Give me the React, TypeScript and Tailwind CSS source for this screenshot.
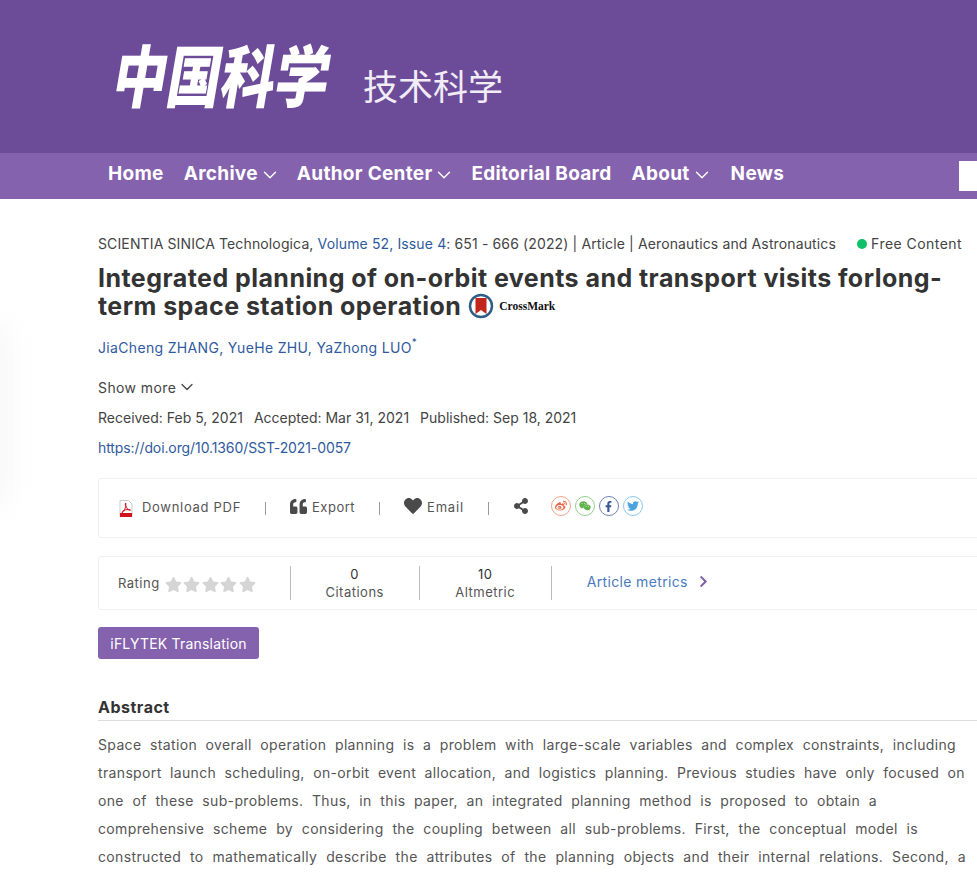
import React from 'react';
import { ChevronDown } from 'lucide-react';
import { FaQuoteLeft, FaHeart, FaShareAlt, FaStar, FaChevronRight, FaWeibo, FaWeixin, FaFacebookF, FaTwitter } from 'react-icons/fa';

const navItems = [
  { label: 'Home', className: '' },
  { label: 'Archive', caret: true, className: '' },
  { label: 'Author Center', caret: true, className: '' },
  { label: 'Editorial Board', className: '' },
  { label: 'About', caret: true, className: '' },
  { label: 'News', className: 'ml-[2px]' },
];

const PdfIcon = () => (
  <svg width="14" height="17" viewBox="0 0 14 17">
    <path d="M1 .5h8.500L13 4v12.500H1z" fill="#fff" stroke="#bbb" strokeWidth=".8" />
    <path d="M6.500 3c-.8 1.500.8 4 2 6 .9 1.300 2.500 1.800 3 1-.5-.8-3-.6-5-.1-2 .6-4 1.700-3.600 2.600.6.700 2.500-1.500 3.300-4.200C6.600 6 7.300 3.500 6.500 3z" fill="none" stroke="#d0121b" strokeWidth="1" />
    <rect x="1" y="13" width="12" height="4" fill="#d0121b" />
  </svg>
);

const CrossMark = () => (
  <svg width="26" height="26" viewBox="0 0 26 26">
    <circle cx="13" cy="13" r="11" fill="#fff" stroke="#2f5d86" strokeWidth="2.500" />
    <path d="M7.500 5h11v16L13 17l-5.500 4z" fill="#c2261a" />
  </svg>
);

const SocialIcon = ({ ring, children }: { ring: string; children: React.ReactNode }) => (
  <span className={`flex h-[20px] w-[20px] items-center justify-center rounded-full border ${ring}`}>
    {children}
  </span>
);

const Divider = () => <span className="mx-[24px] h-[13px] w-px bg-[#999]" />;

const abstractLines = [
  { text: 'Space station overall operation planning is a problem with large-scale variables and complex constraints, including', width: 'w-[858px]' },
  { text: 'transport launch scheduling, on-orbit event allocation, and logistics planning. Previous studies have only focused on', width: 'w-[867px]' },
  { text: 'one of these sub-problems. Thus, in this paper, an integrated planning method is proposed to obtain a', width: 'w-[779px]' },
  { text: 'comprehensive scheme by considering the coupling between all sub-problems. First, the conceptual model is', width: 'w-[820px]' },
  { text: 'constructed to mathematically describe the attributes of the planning objects and their internal relations. Second, a', width: 'w-[868px]' },
];

export default function App() {
  return (
    <div className="relative h-[873px] w-full overflow-hidden bg-white font-['Inter','Noto_Sans_CJK_SC',sans-serif] text-[#444]">
      {/* Faint shadow on the left edge */}
      <div className="absolute left-[-30px] top-[320px] h-[190px] w-[40px] rounded-full bg-[#f8f8f8] blur-[14px]" />

      {/* Journal banner */}
      <header className="flex h-[153px] items-start bg-[#6c4c99] pl-[115px] text-white">
        <span className="mt-[35px] w-[216px] -skew-x-12 scale-y-125 whitespace-nowrap font-['Noto_Sans_CJK_SC',sans-serif] text-[54px] font-black leading-[76px]">中国科学</span>
        <span className="ml-[32px] mt-[60px] whitespace-nowrap font-['Noto_Sans_CJK_SC',sans-serif] text-[35px] leading-[50px] text-[#f1ecf6]">技术科学</span>
      </header>

      {/* Nav */}
      <nav className="flex h-[46px] items-center justify-between bg-[#8562ae] pl-[108px]">
        <ul className="flex gap-[20px] pb-[4px] text-[19px] font-bold tracking-[0.3px] text-white">
          {navItems.map((item) => (
            <li key={item.label} className={`flex items-center ${item.className}`}>
              {item.label}
              {item.caret && <ChevronDown size={22} strokeWidth={1.500} className="ml-[1px] mr-[-4px] mt-[2px]" />}
            </li>
          ))}
        </ul>
        <div className="h-[30px] w-[18px] bg-white" />
      </nav>

      <main className="relative pl-[98px]">
        <div className="mt-[35px] flex h-[20px] w-[864px] items-center justify-between whitespace-nowrap text-[14px] leading-[20px] tracking-[0.13px]">
          <p>
            SCIENTIA SINICA Technologica, <span className="text-[#2f5a9e]">Volume 52, Issue 4</span>: 651 - 666 (2022) | Article | Aeronautics and Astronautics
          </p>
          <p className="flex items-center gap-[4px] tracking-[0.45px]">
            <span className="h-[10px] w-[10px] rounded-full bg-[#10bf68]" />
            Free Content
          </p>
        </div>

        <h1 className="mt-[10px] w-[860px] text-[25px] font-bold leading-[28px] tracking-[0.45px] text-[#333]">
          <span className="block whitespace-nowrap">Integrated planning of on-orbit events and transport visits forlong-</span>
          <span className="flex items-center whitespace-nowrap">
            term space station operation
            <span className="ml-[7px] inline-flex items-center">
              <CrossMark />
              <span className="ml-[5px] font-['Liberation_Serif',serif] text-[11.500px] font-bold tracking-normal text-[#111]">CrossMark</span>
            </span>
          </span>
        </h1>

        <p className="mt-[15px] flex h-[24px] items-center text-[14px] tracking-[0.33px] text-[#2f5a9e]">
          JiaCheng ZHANG, YueHe ZHU, YaZhong LUO<sup className="text-[10px]">*</sup>
        </p>

        <p className="mt-[16px] flex h-[24px] items-center text-[14px] tracking-[0.4px]">
          Show more <ChevronDown size={20} strokeWidth={1.500} className="ml-[1px]" />
        </p>
        <p className="mt-[6px] flex h-[24px] items-center gap-[11px] text-[14px]">
          <span>Received: Feb 5, 2021</span>
          <span>Accepted: Mar 31, 2021</span>
          <span>Published: Sep 18, 2021</span>
        </p>
        <p className="mt-[6px] flex h-[24px] items-center text-[14px] tracking-[-0.1px] text-[#2f5a9e]">
          https://doi.org/10.1360/SST-2021-0057
        </p>

        {/* Tools */}
        <div className="mt-[19px] flex h-[60px] w-[900px] items-center rounded-[3px] border border-[#efefef] pl-[20px] text-[13px] tracking-[0.7px] text-[#555]">
          <span className="flex items-center gap-[9px]"><PdfIcon />Download PDF</span>
          <Divider />
          <span className="flex items-center gap-[5px] tracking-[0.5px]"><FaQuoteLeft size={17} className="mb-[4px] text-[#4a4a4a]" />Export</span>
          <Divider />
          <span className="flex items-center gap-[5px] tracking-[0.8px]"><FaHeart size={18} className="mb-[4px] text-[#4a4a4a]" />Email</span>
          <Divider />
          <FaShareAlt size={16} className="mb-[4px] text-[#4a4a4a]" />
          <span className="mb-[4px] ml-[22px] flex items-center gap-[4px]">
            <SocialIcon ring="border-[#f0a58c]"><FaWeibo size={12} className="text-[#e8694a]" /></SocialIcon>
            <SocialIcon ring="border-[#8fcf8a]"><FaWeixin size={12} className="text-[#5fb24c]" /></SocialIcon>
            <SocialIcon ring="border-[#6f7fb5]"><FaFacebookF size={11} className="text-[#3b5998]" /></SocialIcon>
            <SocialIcon ring="border-[#8cc6ea]"><FaTwitter size={12} className="text-[#4aa3df]" /></SocialIcon>
          </span>
        </div>

        {/* Metrics */}
        <div className="mt-[18px] flex h-[54px] w-[900px] items-center rounded-[3px] border border-[#efefef] text-[13px] tracking-[0.5px] text-[#555]">
          <span className="ml-[19px] mt-[2px]">Rating</span>
          <span className="ml-[5px] mt-[2px] flex gap-[1.500px] text-[#d5d5d5]">
            {[0, 1, 2, 3, 4].map((i) => <FaStar key={i} size={17} />)}
          </span>
          <span className="ml-[34px] h-[34px] w-px bg-[#bbb]" />
          <span className="flex w-[128px] flex-col items-center leading-[18px]">
            <span className="text-[#333]">0</span>
            <span>Citations</span>
          </span>
          <span className="h-[34px] w-px bg-[#bbb]" />
          <span className="flex w-[131px] flex-col items-center leading-[18px]">
            <span className="text-[#333]">10</span>
            <span>Altmetric</span>
          </span>
          <span className="h-[34px] w-px bg-[#bbb]" />
          <span className="mb-[3px] ml-[35px] flex items-center gap-[9px] text-[14px] tracking-[0.35px] text-[#4a7bc0]">
            Article metrics <FaChevronRight size={13} className="text-[#7e5fa8]" />
          </span>
        </div>

        <button className="mt-[17px] block h-[32px] w-[161px] rounded-[3px] bg-[#8562ae] text-[14px] tracking-[0.2px] text-white">
          iFLYTEK Translation
        </button>

        {/* Abstract */}
        <h2 className="mt-[38px] h-[24px] w-[900px] border-b border-[#ddd] text-[16px] font-bold leading-[20px] tracking-[0.5px] text-[#333]">Abstract</h2>
        <div className="mt-[10px] text-[14px] leading-[28px] tracking-[0.35px] text-[#555]">
          {abstractLines.map((line) => (
            <p key={line.text} className={`${line.width} [text-align-last:justify]`}>{line.text}</p>
          ))}
        </div>
      </main>
    </div>
  );
}
